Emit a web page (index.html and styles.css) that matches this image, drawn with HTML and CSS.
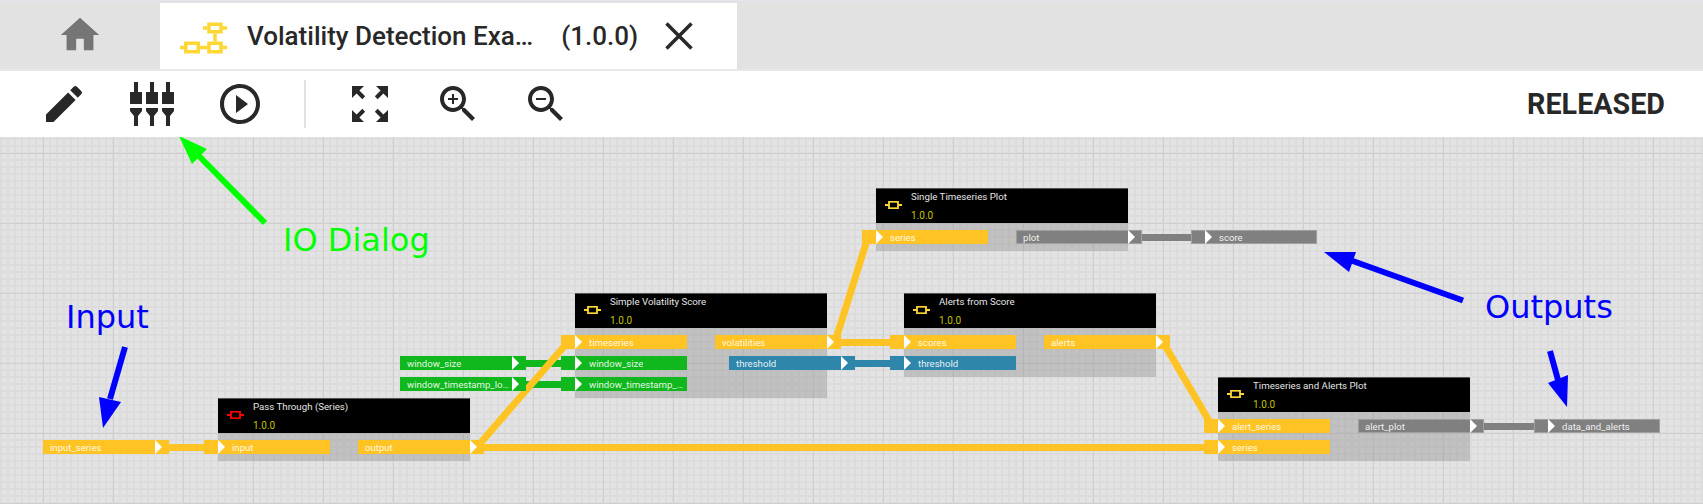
FILE: index.html
```html
<!DOCTYPE html>
<html lang="en">
<head>
<meta charset="utf-8">
<title>Volatility Detection Example</title>
<link rel="stylesheet" href="styles.css">
</head>
<body>
<div class="app">
  <header class="tabbar">
    <div class="home-tab">
      <svg class="icon-home" viewBox="0 0 24 24"><path d="M10 20v-6h4v6h5v-8h3L12 3 2 12h3v8z"/></svg>
    </div>
    <div class="tab">
      <svg class="icon-flow" viewBox="0 0 50 34">
        <g class="flow-lines">
          <rect x="29" y="3.250" width="12" height="7.500"/>
          <rect x="5.750" y="22.250" width="12.500" height="8.500"/>
          <rect x="29" y="22.250" width="12" height="8.500"/>
          <path d="M23 7h4.500M42.500 7H47M0 26.500h4M20 26.500h7.500M42.500 26.500H47M35 12.500v8"/>
        </g>
      </svg>
      <span class="tab-title">Volatility Detection Exa…</span>
      <span class="tab-version">(1.0.0)</span>
      <svg class="icon-close" viewBox="0 0 28 28"><path d="M1.500 1.500l25 25M26.500 1.500l-25 25"/></svg>
    </div>
  </header>

  <nav class="toolbar">
    <svg class="tool" viewBox="0 0 24 24"><path d="M3 17.250V21h3.750L17.810 9.940l-3.750-3.750L3 17.250zM20.710 7.040a1 1 0 0 0 0-1.410l-2.340-2.340a1 1 0 0 0-1.410 0l-1.830 1.830 3.750 3.750 1.830-1.830z"/></svg>
    <svg class="tool" viewBox="0 0 48 48">
      <path d="M6 2h4v10h4v12H2V12h4zM22 2h4v10h4v12H18V12h4zM38 2h4v10h4v12H34V12h4z"/>
      <path d="M2 28h12v3l-4 5v10H6V36l-4-5zM18 28h12v3l-4 5v10h-4V36l-4-5zM34 28h12v3l-4 5v10h-4V36l-4-5z"/>
    </svg>
    <svg class="tool" viewBox="0 0 24 24"><path d="M10 16.500l6-4.500-6-4.500v9zM12 2C6.480 2 2 6.480 2 12s4.480 10 10 10 10-4.480 10-10S17.520 2 12 2zm0 18c-4.410 0-8-3.590-8-8s3.590-8 8-8 8 3.590 8 8-3.590 8-8 8z"/></svg>
    <div class="divider"></div>
    <svg class="tool" viewBox="0 0 24 24"><path d="M15 3l2.300 2.300-2.890 2.870 1.420 1.420L18.700 6.700 21 9V3zM3 9l2.300-2.300 2.870 2.890 1.420-1.420L6.700 5.300 9 3H3zm6 12l-2.300-2.300 2.890-2.870-1.420-1.420L5.300 17.300 3 15v6zm12-6l-2.300 2.300-2.870-2.890-1.420 1.420 2.890 2.870L15 21h6z"/></svg>
    <svg class="tool" viewBox="0 0 24 24"><path d="M15.500 14h-.79l-.28-.27C15.410 12.590 16 11.110 16 9.500 16 5.910 13.090 3 9.500 3S3 5.910 3 9.500 5.910 16 9.500 16c1.610 0 3.090-.59 4.230-1.570l.27.28v.79l5 4.990L20.490 19l-4.990-5zm-6 0C7.010 14 5 11.990 5 9.500S7.010 5 9.500 5 14 7.010 14 9.500 11.990 14 9.500 14zM12 10h-2v2H9v-2H7V9h2V7h1v2h2v1z"/></svg>
    <svg class="tool" viewBox="0 0 24 24"><path d="M15.500 14h-.79l-.28-.27C15.410 12.590 16 11.110 16 9.500 16 5.910 13.090 3 9.500 3S3 5.910 3 9.500 5.910 16 9.500 16c1.610 0 3.090-.59 4.230-1.570l.27.28v.79l5 4.990L20.490 19l-4.990-5zm-6 0C7.010 14 5 11.990 5 9.500S7.010 5 9.500 5 14 7.010 14 9.500 11.990 14 9.500 14zM7 9h5v1H7z"/></svg>
    <span class="status">RELEASED</span>
  </nav>

  <main class="canvas">
    <svg class="layer" viewBox="0 137 1703 367">
      <path class="wire w-green" d="M526 363.500h35M526 384.500h35"/>
      <path class="wire w-blue" d="M855 363.500h35"/>
      <path class="wire w-gray" d="M1142 237.500h49M1484 426.500h50"/>
      <path class="wire w-orange" d="M169 447.500h35M484 447.500h721M477 447L568 342M841 342.500h49M835 342l33-105M1163 342l49 84"/>
    </svg>

    <div class="port port-out c-orange free p-input-series"><span class="label">input_series</span><i class="tri"></i></div>
    <div class="port port-out c-green free p-window-size"><span class="label">window_size</span><i class="tri"></i></div>
    <div class="port port-out c-green free p-window-ts"><span class="label">window_timestamp_lo…</span><i class="tri"></i></div>
    <div class="port port-in c-gray free p-score"><i class="tri"></i><span class="label">score</span></div>
    <div class="port port-in c-gray free p-data"><i class="tri"></i><span class="label">data_and_alerts</span></div>

    <section class="node n-pass">
      <div class="node-head">
        <svg class="chip chip-red" viewBox="0 0 17 8"><path d="M0 4h4M13 4h4"/><rect x="4" y=".75" width="9" height="6.500"/></svg>
        <div class="node-text"><span class="node-title">Pass Through (Series)</span><span class="node-version">1.0.0</span></div>
      </div>
      <div class="node-body">
        <div class="col col-in"><div class="port port-in c-orange"><i class="tri"></i><span class="label">input</span></div></div>
        <div class="col col-out"><div class="port port-out c-orange"><span class="label">output</span><i class="tri"></i></div></div>
      </div>
    </section>

    <section class="node n-vol">
      <div class="node-head">
        <svg class="chip chip-yellow" viewBox="0 0 17 8"><path d="M0 4h4M13 4h4"/><rect x="4" y=".75" width="9" height="6.500"/></svg>
        <div class="node-text"><span class="node-title">Simple Volatility Score</span><span class="node-version">1.0.0</span></div>
      </div>
      <div class="node-body">
        <div class="col col-in">
          <div class="port port-in c-orange"><i class="tri"></i><span class="label">timeseries</span></div>
          <div class="port port-in c-green"><i class="tri"></i><span class="label">window_size</span></div>
          <div class="port port-in c-green"><i class="tri"></i><span class="label">window_timestamp_…</span></div>
        </div>
        <div class="col col-out">
          <div class="port port-out c-orange"><span class="label">volatilities</span><i class="tri"></i></div>
          <div class="port port-out c-blue port-param"><span class="label">threshold</span><i class="tri"></i></div>
        </div>
      </div>
    </section>

    <section class="node n-plot">
      <div class="node-head">
        <svg class="chip chip-yellow" viewBox="0 0 17 8"><path d="M0 4h4M13 4h4"/><rect x="4" y=".75" width="9" height="6.500"/></svg>
        <div class="node-text"><span class="node-title">Single Timeseries Plot</span><span class="node-version">1.0.0</span></div>
      </div>
      <div class="node-body">
        <div class="col col-in"><div class="port port-in c-orange"><i class="tri"></i><span class="label">series</span></div></div>
        <div class="col col-out"><div class="port port-out c-gray"><span class="label">plot</span><i class="tri"></i></div></div>
      </div>
    </section>

    <section class="node n-alerts">
      <div class="node-head">
        <svg class="chip chip-yellow" viewBox="0 0 17 8"><path d="M0 4h4M13 4h4"/><rect x="4" y=".75" width="9" height="6.500"/></svg>
        <div class="node-text"><span class="node-title">Alerts from Score</span><span class="node-version">1.0.0</span></div>
      </div>
      <div class="node-body">
        <div class="col col-in">
          <div class="port port-in c-orange"><i class="tri"></i><span class="label">scores</span></div>
          <div class="port port-in c-blue"><i class="tri"></i><span class="label">threshold</span></div>
        </div>
        <div class="col col-out"><div class="port port-out c-orange"><span class="label">alerts</span><i class="tri"></i></div></div>
      </div>
    </section>

    <section class="node n-both">
      <div class="node-head">
        <svg class="chip chip-yellow" viewBox="0 0 17 8"><path d="M0 4h4M13 4h4"/><rect x="4" y=".75" width="9" height="6.500"/></svg>
        <div class="node-text"><span class="node-title">Timeseries and Alerts Plot</span><span class="node-version">1.0.0</span></div>
      </div>
      <div class="node-body">
        <div class="col col-in">
          <div class="port port-in c-orange"><i class="tri"></i><span class="label">alert_series</span></div>
          <div class="port port-in c-orange"><i class="tri"></i><span class="label">series</span></div>
        </div>
        <div class="col col-out"><div class="port port-out c-gray"><span class="label">alert_plot</span><i class="tri"></i></div></div>
      </div>
    </section>

    <svg class="layer" viewBox="0 137 1703 367">
      <g class="arrow a-green">
        <path d="M198 155L265 223"/><polygon points="179,136 207,149 192,164"/>
      </g>
      <g class="arrow a-blue">
        <path d="M125 347L110 399"/><polygon points="103,428 99,397 121,402"/>
        <path d="M1463 300.500L1350 260"/><polygon points="1324,252 1356,252 1349,272"/>
        <path d="M1550 351L1558 380"/><polygon points="1567,407 1548,383 1568,375"/>
      </g>
    </svg>
    <span class="note note-io">IO Dialog</span>
    <span class="note note-input">Input</span>
    <span class="note note-outputs">Outputs</span>
  </main>
</div>
</body>
</html>
```
FILE: styles.css
```css
* { box-sizing: border-box; }
html, body { margin: 0; padding: 0; height: 504px; overflow: hidden; background: #e2e2e2; }
body { font-family: Roboto, "Liberation Sans", sans-serif; color: #282828; }
.app { display: flex; flex-direction: column; width: 1703px; height: 504px; }

/* tab strip */
.tabbar { display: flex; flex: none; height: 71px; padding-top: 2px; background: #e2e2e2; border-top: 1px solid #e4e4ec; border-bottom: 2px solid #e8e8e8; }
.home-tab { display: flex; width: 160px; padding: 9px 0 0 57px; }
.icon-home { width: 46px; height: 46px; fill: #757575; }
.tab { display: flex; align-items: center; width: 577px; padding-left: 20px; background: #fff; }
.icon-flow { flex: none; width: 50px; height: 34px; margin-top: 3px; }
.flow-lines { fill: none; stroke: #fdd835; stroke-width: 3.500; }
.tab-title { margin-left: 17px; font-size: 26px; font-weight: 500; white-space: nowrap; }
.tab-version { margin-left: 28px; font-size: 26px; font-weight: 500; }
.icon-close { flex: none; width: 28px; height: 28px; margin-left: 27px; fill: none; stroke: #282828; stroke-width: 3.500; }

/* toolbar */
.toolbar { display: flex; flex: none; align-items: center; gap: 40px; height: 66px; padding: 0 38px 0 40px; background: #fff; }
.tool { flex: none; width: 48px; height: 48px; fill: #282828; }
.divider { width: 2px; height: 48px; background: #e2e2e2; }
.status { margin-left: auto; font-size: 28.700px; font-weight: 700; }

/* canvas */
.canvas {
  position: relative; flex: 1; overflow: hidden; background-color: #e3e3e3;
  background-image:
    linear-gradient(90deg, #cfcfcf 1px, transparent 1px),
    linear-gradient(#cfcfcf 1px, transparent 1px),
    linear-gradient(90deg, #dcdcdc 2px, transparent 2px),
    linear-gradient(#dcdcdc 2px, transparent 2px);
  background-size: 70px 70px, 70px 70px, 7px 7px, 7px 7px;
  background-position: 43px 0, 0 16px, 0 0, 0 1px;
}
.layer { position: absolute; left: 0; top: 0; width: 1703px; height: 367px; pointer-events: none; }
.wire { fill: none; stroke-width: 7; }
.w-orange { stroke: #ffc423; }
.w-green { stroke: #10b81e; }
.w-blue { stroke: #2e86ab; }
.w-gray { stroke: #808080; }
.arrow path { fill: none; stroke-width: 6; }
.a-green path { stroke: #00ff00; }
.a-green polygon { fill: #00ff00; }
.a-blue path { stroke: #0000ff; }
.a-blue polygon { fill: #0000ff; }

/* annotations */
.note { position: absolute; font-family: "DejaVu Sans", sans-serif; font-size: 32px; line-height: 36px; white-space: nowrap; }
.note-io { left: 283px; top: 85px; color: #00ff00; }
.note-input { left: 66px; top: 162px; color: #0000ff; }
.note-outputs { left: 1485px; top: 152px; color: #0000ff; }

/* nodes */
.node { position: absolute; width: 252px; }
.n-pass { left: 218px; top: 261px; }
.n-vol { left: 575px; top: 156px; }
.n-plot { left: 876px; top: 51px; }
.n-alerts { left: 904px; top: 156px; }
.n-both { left: 1218px; top: 240px; }
.node-head { display: flex; height: 35px; background: #000; border: 1px solid #555; border-width: 1px 0 0; }
.chip { flex: none; width: 17px; height: 8px; margin: 12px 0 0 9px; fill: none; stroke-width: 1.800; }
.chip-red { stroke: #f00; }
.chip-yellow { stroke: #fdd835; }
.node-text { display: flex; flex-direction: column; gap: 8px; margin-left: 9px; padding-top: 2px; }
.node-title { font-size: 9.700px; line-height: 11px; color: #e6e6e6; white-space: nowrap; }
.node-version { font-size: 10px; line-height: 11px; color: #c4c400; }
.node-body { display: flex; justify-content: space-between; padding: 7px 0; background: rgba(150, 150, 150, .45); }
.col { display: flex; flex-direction: column; gap: 7px; }
.col-in { margin-left: -14px; }
.col-out { margin-right: -14px; align-items: flex-end; }
.port-param { margin-right: -14px; }

/* ports */
.port { display: flex; align-items: center; flex: none; width: 126px; height: 14px; font-size: 9.600px; color: rgba(255, 255, 255, .9); }
.free { position: absolute; }
.port-out { padding: 0 7px; }
.port-in { padding-left: 14px; }
.port-out .label { flex: 1; }
.port-in .label { margin-left: 7px; }
.label { overflow: hidden; white-space: nowrap; }
.tri { flex: none; width: 0; height: 0; border-style: solid; border-width: 7px 0 7px 7px; border-color: transparent transparent transparent #fff; }
.c-orange { background: #ffc423; }
.c-green { background: #10b81e; }
.c-blue { background: #2e86ab; }
.c-gray { background: #808080; box-shadow: inset 0 0 0 1px #a0a0a0; }
.p-input-series { left: 43px; top: 303px; }
.p-window-size { left: 400px; top: 219px; }
.p-window-ts { left: 400px; top: 240px; }
.p-score { left: 1191px; top: 93px; }
.p-data { left: 1534px; top: 282px; }
```
